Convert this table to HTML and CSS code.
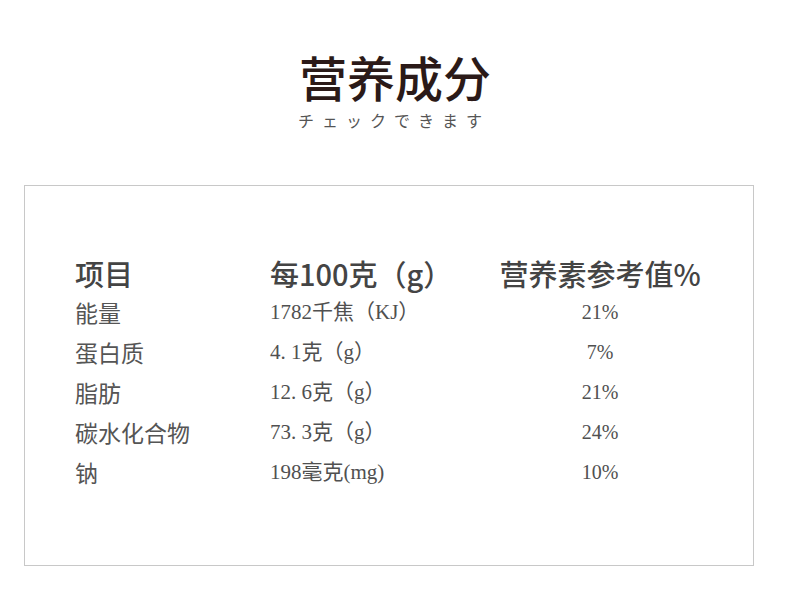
FILE: index.html
```html
<!DOCTYPE html>
<html lang="zh-CN">
<head>
<meta charset="utf-8">
<title>营养成分</title>
<link rel="stylesheet" href="styles.css">
</head>
<body>
<div class="page">
  <header class="heading">
    <h1 class="title">营养成分</h1>
    <p class="subtitle">チェックできます</p>
  </header>
  <section class="panel">
    <div class="table">
      <div class="th">项目</div>
      <div class="th">每100克（g）</div>
      <div class="th th-center">营养素参考值%</div>

      <div class="td label">能量</div>
      <div class="td val">1782千焦（KJ）</div>
      <div class="td val pct">21%</div>

      <div class="td label">蛋白质</div>
      <div class="td val">4.&nbsp;1克（g）</div>
      <div class="td val pct">7%</div>

      <div class="td label">脂肪</div>
      <div class="td val">12.&nbsp;6克（g）</div>
      <div class="td val pct">21%</div>

      <div class="td label">碳水化合物</div>
      <div class="td val">73.&nbsp;3克（g）</div>
      <div class="td val pct">24%</div>

      <div class="td label">钠</div>
      <div class="td val">198毫克(mg)</div>
      <div class="td val pct">10%</div>
    </div>
  </section>
</div>
</body>
</html>
```

FILE: styles.css
```css
* { box-sizing: border-box; }
html, body { margin: 0; padding: 0; background: #ffffff; }
body {
  width: 790px;
  height: 603px;
  overflow: hidden;
  font-family: "Noto Sans CJK SC", "Noto Sans", sans-serif;
}
.page {
  padding-top: 50px;
}
.heading {
  text-align: center;
}
.title {
  margin: 0;
  font-size: 48px;
  line-height: 52px;
  font-weight: 500;
  color: #2b1a18;
}
.subtitle {
  margin: 8px 0 0 0;
  font-size: 16px;
  line-height: 20px;
  color: #555555;
  letter-spacing: 8px;
  padding-right: 2px;
}
.panel {
  margin: 55px 0 0 24px;
  width: 730px;
  border: 1px solid #c8c8c8;
  padding: 68px 0 73px 50px;
}
.table {
  display: grid;
  grid-template-columns: 195px 227px 206px;
}
.th {
  font-size: 29px;
  line-height: 38px;
  font-weight: 500;
  color: #444444;
  white-space: nowrap;
}
.th-center { text-align: center; }
.td {
  height: 40px;
  line-height: 40px;
  white-space: nowrap;
}
.label {
  font-size: 23px;
  color: #555555;
}
.val {
  font-family: "Liberation Serif", "Noto Sans CJK SC", serif;
  font-size: 21px;
  color: #505050;
}
.pct { font-size: 20px; text-align: center; }
```
